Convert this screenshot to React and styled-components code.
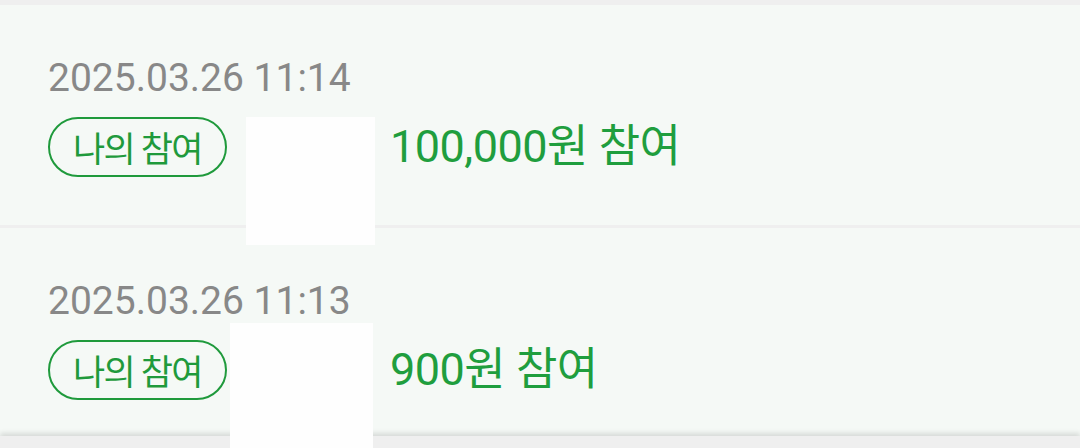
import React from "react";
import styled, { createGlobalStyle } from "styled-components";

const GlobalStyle = createGlobalStyle`
  html, body {
    margin: 0;
    padding: 0;
    background: #efefef;
  }
  body {
    font-family: Roboto, "Noto Sans CJK KR", sans-serif;
    -webkit-font-smoothing: antialiased;
  }
`;

const Page = styled.div`
  width: 1080px;
  height: 448px;
  overflow: hidden;
  background: #efefef;
  padding-top: 5px;
  box-sizing: border-box;
  display: flex;
  flex-direction: column;
`;

const List = styled.ul`
  list-style: none;
  margin: 0;
  padding: 0;
  display: flex;
  flex-direction: column;
  gap: 3px;
`;

const Row = styled.li`
  background: #f5f9f6;
  height: ${(p) => p.height}px;
  box-sizing: border-box;
  padding: 50px 48px 0;
  display: flex;
  flex-direction: column;
  gap: 16px;
`;

const Stamp = styled.div`
  font-family: Roboto, sans-serif;
  font-size: 39px;
  line-height: 46px;
  color: #888888;
`;

const Meta = styled.div`
  display: flex;
  align-items: center;
  height: 60px;
`;

const Badge = styled.span`
  display: inline-flex;
  align-items: center;
  justify-content: center;
  box-sizing: border-box;
  width: 179px;
  height: 60px;
  padding-bottom: 2px;
  border: 2.5px solid #1f9a3c;
  border-radius: 30px;
  color: #1f9a3c;
  font-family: "Noto Sans CJK KR", sans-serif;
  font-size: 35px;
  letter-spacing: -1.5px;
`;

const NameSlot = styled.span`
  position: relative;
  width: 163px;
  height: 60px;
  flex-shrink: 0;
`;

/* nickname is hidden behind a white patch */
const Mask = styled.span`
  position: absolute;
  background: #fefefe;
  z-index: 2;
`;

const Amount = styled.span`
  color: #1f9e3e;
  font-family: Roboto, "Noto Sans CJK KR", sans-serif;
  font-size: 45px;
  line-height: 60px;
  letter-spacing: -0.5px;
`;

const BottomBar = styled.div`
  flex: 1;
  background: #efefef;
  box-shadow: 0 -3px 5px rgba(0, 0, 0, 0.12);
  z-index: 1;
`;

const entries = [
  {
    time: "2025.03.26 11:14",
    amount: "100,000원 참여",
    height: 220,
    mask: { left: 19, top: 0, width: 129, height: 128 },
  },
  {
    time: "2025.03.26 11:13",
    amount: "900원 참여",
    height: 208,
    mask: { left: 3, top: -17, width: 143, height: 135 },
  },
];

export default function App() {
  return (
    <Page>
      <GlobalStyle />
      <List>
        {entries.map((e) => (
          <Row key={e.time} height={e.height}>
            <Stamp>{e.time}</Stamp>
            <Meta>
              <Badge>나의 참여</Badge>
              <NameSlot>
                <Mask style={e.mask} />
              </NameSlot>
              <Amount>{e.amount}</Amount>
            </Meta>
          </Row>
        ))}
      </List>
      <BottomBar />
    </Page>
  );
}
